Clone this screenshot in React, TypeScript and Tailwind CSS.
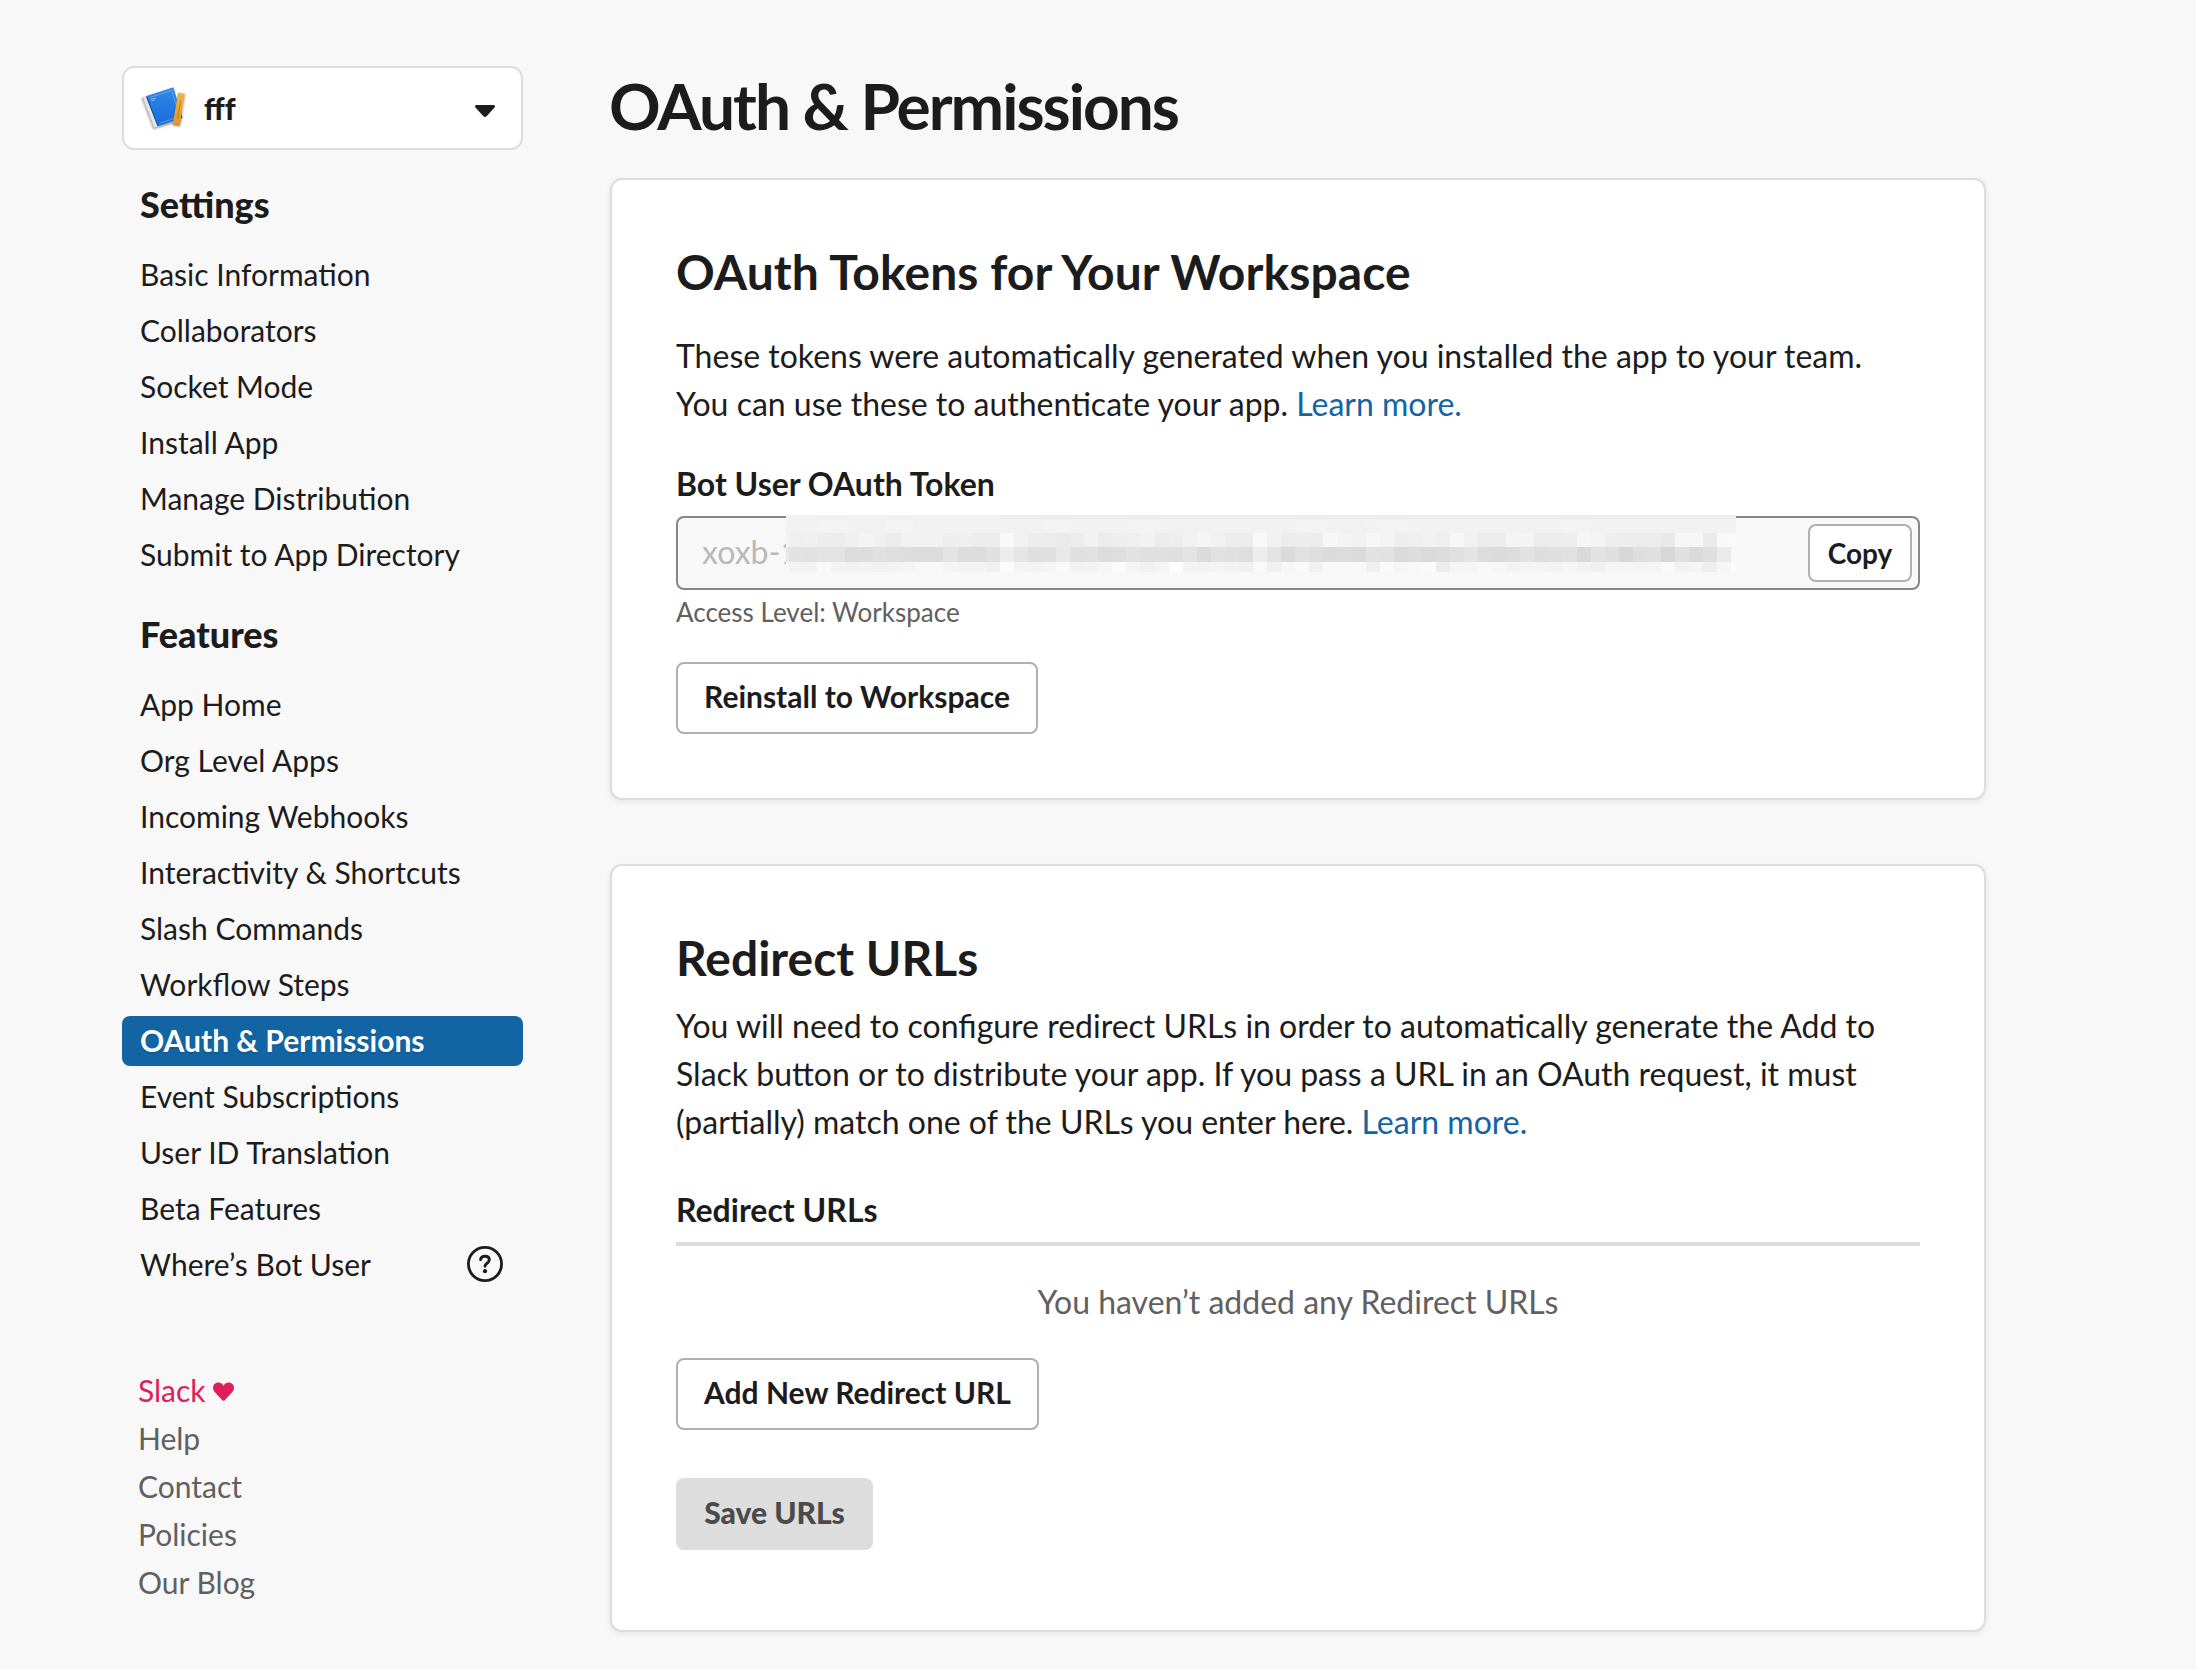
import type { ReactNode } from "react";

const settings = [
  "Basic Information",
  "Collaborators",
  "Socket Mode",
  "Install App",
  "Manage Distribution",
  "Submit to App Directory",
];

const features = [
  "App Home",
  "Org Level Apps",
  "Incoming Webhooks",
  "Interactivity & Shortcuts",
  "Slash Commands",
  "Workflow Steps",
  "OAuth & Permissions",
  "Event Subscriptions",
  "User ID Translation",
  "Beta Features",
  "Where’s Bot User",
];

// Grey levels (two hex digits per cell) of the censored part of the token.
const redactedRows = [
  {
    y: 18.3,
    h: 13.4,
    first: "f4",
    last: "fa",
    cells:
      "eff0edecf0f4f0ecf1f1f1eeefededf9f1edeceaecf2eceeeff2eceef1f5f1ededf8f1ecedecf7f4f1f6f3eeeff1eff7f1ecedf4f4ecedeef6f3eeedecede9f6f6ebf9",
  },
  {
    y: 31.7,
    h: 15,
    first: "e8",
    last: "f8",
    cells:
      "e2e1e3e3dcdde0dedddcdce3dcdce0ede5dfe0e9e0e1dcdee2e0e0dfe3dbe1e0deece4dae1dedbdcdae2e1dadddadce0e4dcdbdce2dddfe1d9e2dfd7dee0d7e0dadfea",
  },
  {
    y: 46.7,
    h: 10.3,
    first: "f8",
    last: "fb",
    cells:
      "f3f3f8f3f2f3f1f3f5f8f8f4f3f3f0fbf4f3f4f9f2f3f6fbf5f1f4fcf3f3f4f3f0f9f0f6f9f1f8f8f8f0f9f6f8faedf5f5f8f6f3f4f4f3f5f3f0f4f5f4f4f9f2f4eef6",
  },
];

const grey = (level: string) => `#${level}${level}${level}`;

function RedactedToken() {
  const step = 14.07;
  return (
    <svg className="absolute -top-[3px] left-[108px]" width="950" height="57" viewBox="0 0 950 57">
      <rect width="950" height="57" fill="#f2f2f2" />
      <rect width="214" height="4" fill="#f1f1f1" />
      <rect x="214" width="736" height="4" fill="#ededed" />
      {[0, 5, 9, 16, 27, 34, 39, 45, 52, 63].map((c) => (
        <rect key={c} x={2.7 + c * step} y="4" width={step * 2} height="14.3" fill="#f1f1f1" />
      ))}
      {[2, 7, 18, 24, 36, 42, 55].map((c) => (
        <rect key={c} x={2.7 + c * step} y="4" width={step * 2} height="14.3" fill="#f3f3f3" />
      ))}
      {redactedRows.map((row) => (
        <g key={row.y} shapeRendering="crispEdges">
          <rect x="0" y={row.y} width="3" height={row.h} fill={grey(row.first)} />
          {(row.cells.match(/../g) ?? []).map((level, i) => (
            <rect key={i} x={2.7 + i * step} y={row.y} width={step} height={row.h} fill={grey(level)} />
          ))}
          <rect x="945.4" y={row.y} width="4.6" height={row.h} fill={grey(row.last)} />
        </g>
      ))}
    </svg>
  );
}

function AppIcon() {
  return (
    <svg width="56" height="52" viewBox="0 0 168 156">
      <defs>
        <linearGradient id="cover" x1="0" y1="0" x2="0" y2="1">
          <stop offset="0" stopColor="#3389e6" />
          <stop offset="1" stopColor="#176bdf" />
        </linearGradient>
        <linearGradient id="ruler" x1="0" y1="0" x2="0" y2="1">
          <stop offset="0" stopColor="#ecb443" />
          <stop offset="1" stopColor="#e0952a" />
        </linearGradient>
        <filter id="soft" x="-20%" y="-20%" width="140%" height="140%">
          <feGaussianBlur stdDeviation="3" />
        </filter>
      </defs>
      <path d="M17 48 52 142 136 116 112 24Z" fill="#000" opacity=".4" filter="url(#soft)" />
      <path d="M18 47 31 43 66 133 52 138Z" fill="#e6e6e6" />
      <path d="M20 48 54 137" stroke="#b4b4b4" strokeWidth="3" />
      <path d="M34 42 68 131 64 132 30 44Z" fill="#0b4a9e" />
      <path d="M34 41 112 16 140 107 66 132Z" fill="url(#cover)" />
      <path d="M42 46 107 25 131 104 70 124" fill="none" stroke="#7db8f3" strokeWidth="2" />
      <path d="M44 52l14-4-4 7-8 2" fill="none" stroke="#9accf7" strokeWidth="2" />
      <path d="M127 34 148 37 133 135 111 131Z" fill="#000" opacity=".3" filter="url(#soft)" />
      <path d="M126 32 146 35 131 133 110 129Z" fill="url(#ruler)" />
      <path d="M134 55 125 110" stroke="#b87816" strokeWidth="2.5" />
    </svg>
  );
}

function HelpIcon() {
  return (
    <svg className="mb-0.5" width="36" height="36" viewBox="0 0 36 36" fill="none" stroke="#1d1c1d">
      <circle cx="18" cy="18" r="16.6" strokeWidth="2.8" />
      <path
        d="M13.6 13.6c.3-2.200 2-3.400 4.400-3.400 2.600 0 4.300 1.400 4.300 3.500 0 1.800-1 2.700-2.200 3.500-1.300.8-2.100 1.400-2.100 3"
        strokeWidth="2.9"
        strokeLinecap="round"
      />
      <circle cx="18" cy="25.2" r="2.1" fill="#1d1c1d" stroke="none" />
    </svg>
  );
}

function NavItem({ label }: { label: string }) {
  const active = label === "OAuth & Permissions";
  return (
    <li
      className={
        active
          ? "flex h-[50px] items-center justify-between rounded-lg bg-[#1264a3] pr-5 pl-[18px] font-bold text-white [text-shadow:0_2px_0_rgba(0,0,0,0.1)]"
          : "flex h-[50px] items-center justify-between pr-5 pl-[18px]"
      }
    >
      <a className="pb-0.5 leading-9">{label}</a>
      {label.startsWith("Where") && <HelpIcon />}
    </li>
  );
}

function NavSection({ title, items }: { title: string; items: string[] }) {
  return (
    <section className="pt-8">
      <h2 className="pl-[18px] text-[36px] leading-[44px] font-black">{title}</h2>
      <ul className="mt-6 flex flex-col gap-1.5">
        {items.map((item) => (
          <NavItem key={item} label={item} />
        ))}
      </ul>
    </section>
  );
}

function Card({ className, children }: { className: string; children: ReactNode }) {
  return (
    <section
      className={`flex flex-col items-start rounded-xl border-2 border-[#dddddd] bg-white px-16 pt-[63px] shadow-[0_2px_6px_rgba(0,0,0,0.08)] ${className}`}
    >
      {children}
    </section>
  );
}

const outlineButton =
  "flex h-[72px] items-center justify-center rounded-lg border-2 border-[#b0b0b0] bg-white pb-1 leading-9 font-bold";

export default function App() {
  return (
    <div className="flex h-[1670px] w-[2196px] items-start overflow-hidden bg-[#f8f8f8] pl-[122px] font-['Lato',sans-serif] text-[30px] text-[#1d1c1d]">
      <aside className="w-[401px] pt-[66px]">
        <button className="flex h-[84px] w-full items-center rounded-xl border-2 border-[#dddddd] bg-white pr-[26px] pl-3">
          <AppIcon />
          <span className="ml-3 leading-9 font-black">fff</span>
          <svg className="mt-1.5 ml-auto" width="20" height="12" viewBox="0 0 20 12" fill="#1d1c1d">
            <path d="M1.6 0h16.8c1.5 0 2.1 1.5 1.1 2.6l-7.9 8.7c-.9.9-2.3.9-3.2 0L.5 2.6C-.5 1.5.1 0 1.6 0Z" />
          </svg>
        </button>
        <nav>
          <NavSection title="Settings" items={settings} />
          <NavSection title="Features" items={features} />
        </nav>
        <footer className="mt-[76px] flex flex-col pl-4 leading-[48px] text-[#616061]">
          <a className="flex items-center text-[#e01e5a]">
            Slack
            <svg className="mt-[3px] ml-[7px]" width="21" height="19" viewBox="0 0 22 19" preserveAspectRatio="none" fill="currentColor">
              <path d="M11 18.8c-.5 0-.9-.2-1.3-.6L2.2 10.6C.8 9.2 0 7.7 0 5.8 0 2.7 2.4.4 5.5.4c2.3 0 4.200 1 5.500 3.300C12.300 1.400 14.200.4 16.500.4 19.600.4 22 2.700 22 5.800c0 1.900-.8 3.400-2.200 4.800l-7.500 7.600c-.4.4-.8.6-1.300.6Z" />
            </svg>
          </a>
          <a>Help</a>
          <a>Contact</a>
          <a>Policies</a>
          <a>Our Blog</a>
        </footer>
      </aside>

      <main className="ml-[87px] w-[1376px] pt-[67px]">
        <h1 className="-ml-px h-[111px] text-[64px] leading-[77px] font-bold tracking-[-2px]">OAuth &amp; Permissions</h1>

        <Card className="h-[622px]">
          <h2 className="text-[48px] leading-[57px] font-bold tracking-[0.08px]">OAuth Tokens for Your Workspace</h2>
          <p className="mt-8 text-[32px] leading-[48px]">
            These tokens were automatically generated when you installed the app to your team.
            <br />
            You can use these to authenticate your app. <a className="text-[#1264a3]">Learn more.</a>
          </p>
          <h3 className="mt-9 text-[32px] leading-[39px] font-bold">Bot User OAuth Token</h3>
          <div className="relative mt-[13px] flex h-[74px] w-full items-center justify-between rounded-lg border-2 border-[#868686] bg-[#f8f8f8] pr-1.5 pl-6">
            <span className="pb-[3px] text-[32px] leading-[39px] text-[#b9b9b9]">xoxb-1</span>
            <RedactedToken />
            <button className="flex h-[58px] w-[104px] items-center justify-center rounded-lg border-2 border-[#b0b0b0] bg-white text-[28px] leading-[34px] font-bold">
              Copy
            </button>
          </div>
          <p className="mt-1.5 text-[26px] leading-8 text-[#616061]">Access Level: Workspace</p>
          <button className={`${outlineButton} mt-[34px] w-[362px]`}>Reinstall to Workspace</button>
        </Card>

        <Card className="mt-16 h-[768px]">
          <h2 className="text-[48px] leading-[57px] font-bold">Redirect URLs</h2>
          <p className="mt-4 text-[32px] leading-[48px]">
            You will need to configure redirect URLs in order to automatically generate the Add to
            <br />
            Slack button or to distribute your app. If you pass a URL in an OAuth request, it must
            <br />
            (partially) match one of the URLs you enter here. <a className="text-[#1264a3]">Learn more.</a>
          </p>
          <h3 className="mt-11 w-full border-b-4 border-[#dddddd] pb-[13px] text-[32px] leading-[39px] font-bold">
            Redirect URLs
          </h3>
          <p className="mt-9 w-full text-center text-[32px] leading-[39px] text-[#616061]">
            You haven’t added any Redirect URLs
          </p>
          <button className={`${outlineButton} mt-[37px] w-[363px]`}>Add New Redirect URL</button>
          <button className="mt-12 flex h-[72px] w-[197px] items-center justify-center rounded-lg bg-[#dddddd] pb-1 leading-9 font-black text-[#4a4a4a]">
            Save URLs
          </button>
        </Card>
      </main>
    </div>
  );
}
